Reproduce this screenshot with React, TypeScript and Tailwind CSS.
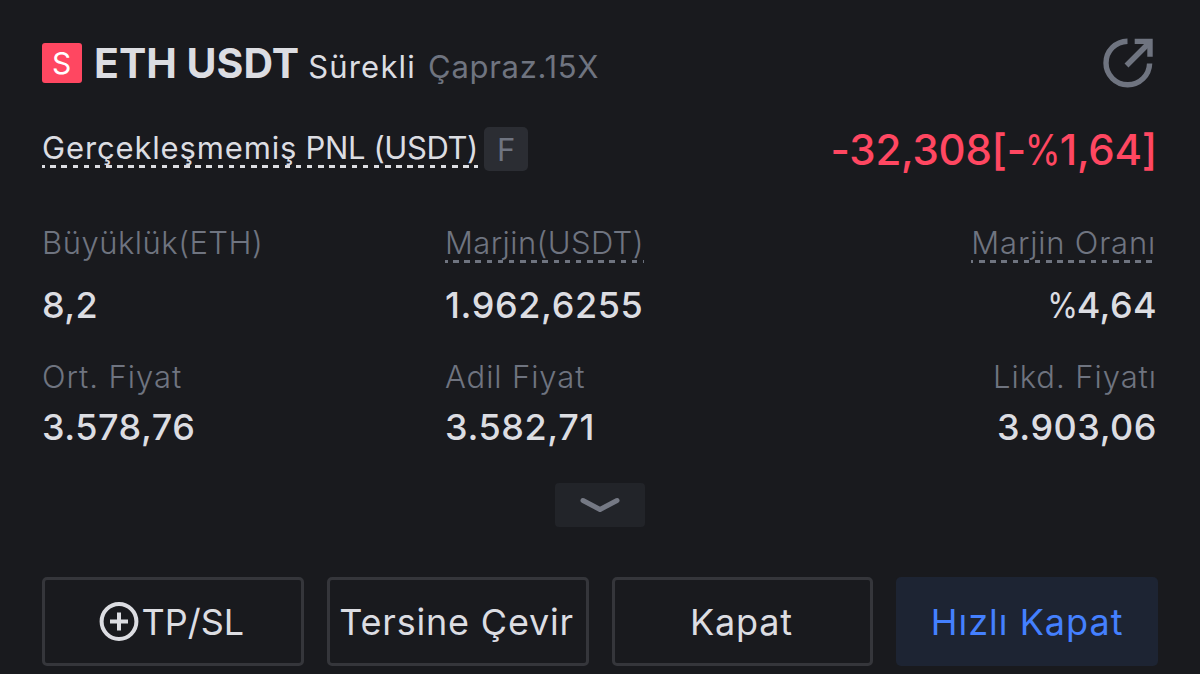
import clsx from 'clsx';

interface Stat {
  label: string;
  value: string;
  labelClass: string;
  valueClass: string;
  underline?: boolean;
}

const topStats: Stat[] = [
  { label: 'Büyüklük(ETH)', value: '8,2', labelClass: 'tracking-[0.5px]', valueClass: 'tracking-[0.4px]' },
  { label: 'Marjin(USDT)', value: '1.962,6255', labelClass: 'tracking-[0.4px]', valueClass: 'tracking-[0.6px]', underline: true },
  { label: 'Marjin Oranı', value: '%4,64', labelClass: 'tracking-[0.8px]', valueClass: 'tracking-[0.4px] -mr-[1px]', underline: true }
];

const bottomStats: Stat[] = [
  { label: 'Ort. Fiyat', value: '3.578,76', labelClass: 'tracking-[0.95px]', valueClass: 'tracking-[0.5px]' },
  { label: 'Adil Fiyat', value: '3.582,71', labelClass: 'tracking-[0.9px]', valueClass: 'tracking-[0.6px]' },
  { label: 'Likd. Fiyatı', value: '3.903,06', labelClass: 'tracking-[0.95px] -mr-[1px]', valueClass: 'tracking-[0.5px] -mr-[1px]' }
];

const dashes =
  'bg-[repeating-linear-gradient(90deg,currentColor_0_2.6px,transparent_2.6px_8.2px,currentColor_8.2px_11.16px)] bg-no-repeat bg-bottom bg-[length:100%_3px]';

const ShareIcon = () => (
  <svg width="54" height="54" viewBox="0 0 54 54" fill="none" stroke="#6f7480" strokeWidth="5.4">
    <path d="M26.5 5.2A21.8 21.8 0 1 0 48.6 27.5" />
    <path d="M25.5 29.5 48 7" />
    <path d="M33.7 5.4H49V20.7" />
  </svg>
);

const PlusIcon = () => (
  <svg width="40" height="40" viewBox="0 0 40 40" fill="none" stroke="#dcdde2" strokeWidth="4">
    <circle cx="20" cy="19.5" r="17.4" />
    <path d="M11 19.5h18M20 10.5v18" />
  </svg>
);

// Narrow, thin percent sign followed by the rest of the number
const Amount = ({ text }: { text: string }) => {
  const [before, after] = text.split('%');
  if (after === undefined) return <>{text}</>;
  return (
    <>
      {before}
      <span className="inline-block scale-x-[0.87] -mx-[0.09em] font-normal tracking-normal">%</span>
      {after}
    </>
  );
};

const StatRow = ({ stats, compact }: { stats: Stat[]; compact?: boolean }) => (
  <div className="grid grid-cols-[403px_403px_1fr]">
    {stats.map((s, i) => (
      <div key={s.label} className={clsx('flex flex-col', i === 2 ? 'items-end' : 'items-start')}>
        <div
          className={clsx(
            'h-[40px] text-[31px] leading-[40px] font-[350] text-[#6f7480] whitespace-nowrap',
            s.labelClass,
            s.underline && dashes
          )}
        >
          {s.label}
        </div>
        <div
          className={clsx(
            'h-[40px] text-[36px] leading-[40px] font-[460] text-[#dcdde2] whitespace-nowrap',
            compact ? 'mt-[10px]' : 'mt-[22px]',
            s.valueClass
          )}
        >
          <Amount text={s.value} />
        </div>
      </div>
    ))}
  </div>
);

const App = () => {
  const button =
    'flex h-[89px] items-center justify-center rounded-[5px] pt-[1px] text-[36px] font-[430] whitespace-nowrap';

  return (
    <div className="h-[674px] w-[1200px] overflow-hidden bg-[#191a1e] pl-[42px] pr-[42px] pt-[36px] font-['Inter','Liberation_Sans',sans-serif]">
      {/* Pair */}
      <div className="flex h-[54px] items-center justify-between">
        <div className="flex items-center">
          <div className="mr-[12px] flex size-[40px] items-center justify-center rounded-[3px] bg-[#ff4761] text-[30px] text-white">
            <span className="-ml-[1px]">S</span>
          </div>
          <div className="flex items-baseline pt-[4px] leading-[54px] whitespace-nowrap">
            <span className="text-[41px] font-bold text-[#dcdde2]">ETH USDT</span>
            <span className="ml-[9px] text-[31px] tracking-[1.2px] text-[#dcdde2]">Sürekli</span>
            <span className="ml-[12px] text-[31px] tracking-[0.7px] text-[#6f7480]">Çapraz.15X</span>
          </div>
        </div>
        <div className="mr-[3px]">
          <ShareIcon />
        </div>
      </div>

      {/* PNL */}
      <div className="mt-[37px] flex h-[44px] items-center justify-between">
        <div className="flex items-center">
          <span className={clsx('mb-[3px] h-[41px] text-[31px] leading-[41px] text-[#dcdde2] whitespace-nowrap', dashes)}>
            <span className="tracking-[0.85px]">Gerçekleşmemiş</span>
            <span className="tracking-[-0.4px]"> PNL (USDT)</span>
          </span>
          <span className="ml-[6px] flex size-[44px] items-center justify-center rounded-[5px] bg-[#2b2d33] pt-[2px] text-[31px] text-[#6f7480]">
            F
          </span>
        </div>
        <span className="mr-[1px] pt-[2px] text-[42px] leading-[44px] font-[450] tracking-[-0.25px] text-[#ff4761] whitespace-nowrap">
          <Amount text="-32,308[-%1,64]" />
        </span>
      </div>

      {/* Position details */}
      <div className="mt-[52px] mr-[2px]">
        <StatRow stats={topStats} />
      </div>
      <div className="mt-[32px] mr-[2px]">
        <StatRow stats={bottomStats} compact />
      </div>

      <div className="mt-[36px] flex justify-center">
        <button type="button" className="flex h-[44px] w-[90px] items-center justify-center rounded-[4px] bg-[#222429]">
          <svg width="40" height="16" viewBox="0 0 40 16" fill="none" stroke="#757984" strokeWidth="5" strokeLinecap="round" strokeLinejoin="round">
            <path d="M3 3.5 20 12.5 37 3.5" />
          </svg>
        </button>
      </div>

      {/* Actions */}
      <div className="mt-[50px] grid grid-cols-4 gap-[23px]">
        <button type="button" className={clsx(button, 'border-[3px] border-[#35363b] text-[#dcdde2]')}>
          <PlusIcon />
          <span className="ml-[3px] mr-[3px]">TP/SL</span>
        </button>
        <button type="button" className={clsx(button, 'border-[3px] border-[#35363b] pr-[2px] tracking-[0.8px] text-[#dcdde2]')}>
          Tersine Çevir
        </button>
        <button type="button" className={clsx(button, 'border-[3px] border-[#35363b] pr-[2px] tracking-[0.8px] text-[#dcdde2]')}>
          Kapat
        </button>
        <button type="button" className={clsx(button, 'bg-[#1d2433] tracking-[1px] text-[#4480ff]')}>
          Hızlı Kapat
        </button>
      </div>
    </div>
  );
};

export default App;
